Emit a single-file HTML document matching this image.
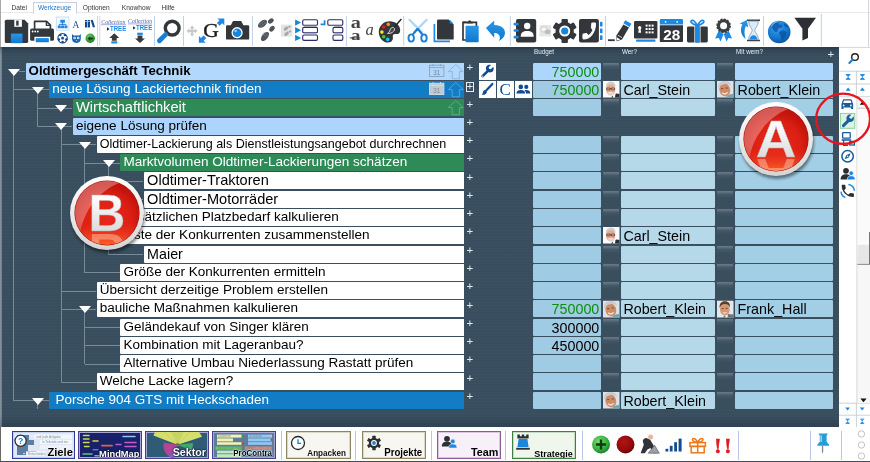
<!DOCTYPE html>
<html lang="de"><head><meta charset="utf-8"><title>Oldtimergeschäft Technik</title>
<style>
*{box-sizing:border-box;margin:0;padding:0}
html,body{width:870px;height:462px;overflow:hidden;background:#fff}
body{position:relative;will-change:transform;font-family:"Liberation Sans",sans-serif;color:#000}
.abs,.abs *{position:absolute}
#main{left:0;top:47px;width:839px;height:380px;background:#394f5f;overflow:hidden}
#main:before{content:"";position:absolute;inset:0;background:linear-gradient(180deg,rgba(10,20,35,.34) 0,rgba(10,20,35,.12) 4px,rgba(10,20,35,0) 9px,rgba(10,20,35,0) 368px,rgba(10,20,35,.22) 380px),linear-gradient(90deg,rgba(190,200,208,.55) 0,rgba(190,200,208,.55) 1.2px,rgba(190,200,208,0) 2.5px),repeating-linear-gradient(180deg,rgba(255,255,255,.012) 0 1px,rgba(0,0,0,.012) 1px 3px)}
.tb{position:absolute;border-radius:1px 0 0 1px;white-space:nowrap;overflow:hidden;padding-left:3.1px}
.tl{position:absolute;background:#788a96}
.cell{position:absolute;border-radius:1px;white-space:nowrap;overflow:hidden;font-size:14.3px}
.slot{position:absolute;background:linear-gradient(180deg,#6a7a85 0,#5c6e7a 1.5px,#43586a 3.5px,#3a4f5e 7px)}
.plus{position:absolute;color:#e4e9ec;font-size:11.5px;line-height:11px}
.menu span{position:absolute;top:3.2px;font-size:6.6px;line-height:9px;color:#333}
.hd{position:absolute;color:#e8eef2;font-size:6.3px;line-height:8px;top:0.6px}
svg{position:absolute;overflow:visible}
</style></head><body>

<div class="menu" style="position:absolute;left:0;top:0;width:870px;height:13.3px;background:#fff;border-bottom:1px solid #e3e7ee">
<div style="position:absolute;left:33.3px;top:1.6px;width:44px;height:12.7px;border:1px solid #c9d3e0;border-bottom:1px solid #fff;background:#fff"></div>
<span style="left:11.5px;color:#333">Datei</span>
<span style="left:38px;color:#1a78d0">Werkzeuge</span>
<span style="left:82.8px;color:#333">Optionen</span>
<span style="left:121.8px;color:#333">Knowhow</span>
<span style="left:161.6px;color:#333">Hilfe</span>
</div>
<div id="toolbar" style="position:absolute;left:0;top:14.3px;width:870px;height:32.7px;background:#fff"></div>
<svg id="tbsvg" style="left:0;top:0" width="870" height="47" viewBox="0 0 870 47" font-family="Liberation Sans, sans-serif">
<defs>
<linearGradient id="gb" x1="0" y1="0" x2="0" y2="1"><stop offset="0" stop-color="#2a96ea"/><stop offset="1" stop-color="#0f78cc"/></linearGradient>
<radialGradient id="gg" cx=".4" cy=".35" r=".7"><stop offset="0" stop-color="#6fd46a"/><stop offset="1" stop-color="#157a1c"/></radialGradient>
<radialGradient id="gglobe" cx=".4" cy=".3" r=".8"><stop offset="0" stop-color="#3aa0ee"/><stop offset=".6" stop-color="#1276cc"/><stop offset="1" stop-color="#084a94"/></radialGradient>
</defs>
<g stroke="#c3cfe3" stroke-width="1">
<path d="M97.5 16V46M99.8 16V46" stroke="#cdd7e8"/><path d="M154.5 16V46M183.5 16V46M252.4 16V46M346.4 16V46M403.7 16V46M510.3 16V46M605.5 16V46M763.6 16V46M821.3 14V46"/>
</g>
<!-- floppy -->
<path d="M6.3 19.8H24.6L28.2 23.4V41.5Q28.2 43 26.7 43H6.3Q4.8 43 4.8 41.5V21.3Q4.8 19.8 6.3 19.8Z" fill="#33383e"/>
<rect x="14.3" y="19.6" width="7.6" height="7.2" fill="#fff"/><rect x="16.2" y="20.6" width="2.4" height="5" fill="#33383e"/>
<rect x="10.9" y="33.6" width="11.6" height="9.6" fill="url(#gb)"/>
<!-- printer -->
<path d="M34.6 29V21.4H46.6L50.4 25.2V29" fill="#fff" stroke="#33383e" stroke-width="1.7" stroke-linejoin="round"/>
<path d="M46.4 21.4V25.4H50.4" fill="none" stroke="#33383e" stroke-width="1.4"/>
<rect x="30.1" y="28.6" width="23.9" height="12.2" rx="1.6" fill="#33383e"/>
<circle cx="32.6" cy="31.5" r=".9" fill="#fff"/><circle cx="35.2" cy="31.5" r=".9" fill="#fff"/><circle cx="37.8" cy="31.5" r=".9" fill="#fff"/>
<rect x="34.4" y="36.8" width="15.8" height="6.4" fill="#fff"/><rect x="35.7" y="37.9" width="13.2" height="4.3" rx=".8" fill="url(#gb)"/>
<!-- small icon grid -->
<rect x="56.3" y="17" width="12.6" height="13.2" fill="#f2f8fe" stroke="#c2daf3" stroke-width=".8"/>
<g fill="#1e88e5"><rect x="60.3" y="19.8" width="4.6" height="3"/><rect x="57.8" y="25.6" width="3" height="2.6"/><rect x="61.1" y="25.6" width="3" height="2.6"/><rect x="64.4" y="25.6" width="3" height="2.6"/></g>
<path d="M62.6 22.8V24.4M59.3 25.6V24.4H65.9V25.6M62.6 24.4V25.6" stroke="#155fa8" stroke-width=".8" fill="none"/>
<text x="72.6" y="28.4" font-family="Liberation Serif, serif" font-size="9.4" fill="#1d5a9e">A</text>
<g fill="#0f4b8e"><rect x="85" y="20" width="2.2" height="7.5"/><rect x="87.8" y="20" width="2.2" height="7.5"/><path d="M90.6 20.3L92.7 19.7L95 27L92.9 27.6Z"/></g>
<rect x="85" y="21.2" width="5" height=".7" fill="#fff" opacity=".7"/>
<circle cx="62.6" cy="38.2" r="4.700" fill="#fff" stroke="#0f4b8e" stroke-width="1.100"/>
<path d="M62.60 36.50L64.22 37.67L63.60 39.58L61.60 39.58L60.98 37.67Z" fill="#0f4b8e"/>
<circle cx="64.89" cy="35.04" r="1.250" fill="#0f4b8e"/>
<circle cx="66.31" cy="39.41" r="1.250" fill="#0f4b8e"/>
<circle cx="62.60" cy="42.10" r="1.250" fill="#0f4b8e"/>
<circle cx="58.89" cy="39.41" r="1.250" fill="#0f4b8e"/>
<circle cx="60.31" cy="35.04" r="1.250" fill="#0f4b8e"/>
<path d="M72 34l1.6 1.4h5.6L80.8 34v4.4q0 4-4.4 4.6q-4.4-.6-4.4-4.600z" fill="#1565b0"/>
<circle cx="74.6" cy="38" r="1.3" fill="#fff"/><circle cx="78.2" cy="38" r="1.3" fill="#fff"/><circle cx="74.6" cy="38" r=".5" fill="#1565b0"/><circle cx="78.2" cy="38" r=".5" fill="#1565b0"/><path d="M75.8 40l.6 1.200l.6-1.200z" fill="#fff"/>
<circle cx="90.2" cy="38.2" r="4.7" fill="url(#gg)"/><path d="M87.600 38.500l2.600-2.400v1.500h2.800v1.900h-2.800v1.500z" fill="#1c3a1c"/>
<!-- TREE 1 -->
<text x="101.300" y="23.800" font-family="Liberation Serif, serif" font-style="italic" font-size="5.300" fill="#4a5db5" textLength="24" lengthAdjust="spacingAndGlyphs">Collection</text>
<path d="M101 24.700H126" stroke="#4a5db5" stroke-width=".5"/>
<path d="M107 27.300l2.600 1.700l-2.600 1.700z" fill="#152a66"/>
<text x="110" y="31.200" font-size="6.600" font-weight="bold" fill="#1e88e5" textLength="16.200" lengthAdjust="spacingAndGlyphs">TREE</text>
<path d="M114.300 33.300l5 4.600h-2.600v2.800h-4.800v-2.800h-2.600z" fill="#3a3a3a"/><rect x="111.300" y="41.300" width="6" height="2.200" fill="#1e88e5"/>
<!-- TREE 2 -->
<text x="128.100" y="23" font-family="Liberation Serif, serif" font-style="italic" font-size="5.300" fill="#4a5db5" textLength="24" lengthAdjust="spacingAndGlyphs">Collection</text>
<path d="M128 23.900H152" stroke="#4a5db5" stroke-width=".5"/>
<path d="M133 26.200l2.600 1.700l-2.600 1.700z" fill="#152a66"/>
<text x="136" y="30.200" font-size="6.600" font-weight="bold" fill="#1e88e5" textLength="16.200" lengthAdjust="spacingAndGlyphs">TREE</text>
<rect x="137.200" y="32.700" width="5.600" height="2.200" fill="#1e88e5"/><path d="M140 43l-5-4.600h2.600v-2.800h4.800v2.800h2.600z" fill="#3a3a3a"/>
<!-- magnifier -->
<circle cx="172.200" cy="28.100" r="6.900" fill="none" stroke="#33363b" stroke-width="3.400"/>
<path d="M165.600 34.600L159.400 40.800" stroke="#1a7fd4" stroke-width="4.800" stroke-linecap="round"/>
<!-- move -->
<path d="M192.100 25.500l2.400 2.800h-1.400v1.700h1.700v-1.400l2.800 2.400l-2.800 2.400v-1.400h-1.700v1.700h1.400l-2.400 2.800l-2.400-2.800h1.400v-1.700h-1.700v1.400l-2.800-2.400l2.800-2.400v1.400h1.700v-1.700h-1.400z" fill="#c9c9c9"/>
<!-- G -->
<text x="0" y="0" transform="translate(203.300 36.800) scale(1.170 1)" font-family="Liberation Serif, serif" font-size="18.400" fill="#1c1c1c" stroke="#1c1c1c" stroke-width=".35">G</text>
<path d="M224.300 18.500v6.800l-2.100-2.100l-2.600 2.600l-2.700-2.700l2.600-2.600l-2.100-2.100z" fill="#1e88e5"/>
<path d="M198.900 42.700v-6.800l2.100 2.100l2.600-2.600l2.700 2.700l-2.600 2.600l2.100 2.100z" fill="#1e88e5"/>
<!-- camera -->
<path d="M227.200 25.200h3.600l2.200-4.200h8.200l2.200 4.200h4.600q1.200 0 1.200 1.200v12q0 1.200-1.200 1.200h-20.800q-1.200 0-1.200-1.200v-12q0-1.200 1.200-1.200z" fill="#33363b"/>
<circle cx="237.100" cy="32.700" r="5.600" fill="#fff"/><circle cx="237.100" cy="32.700" r="4.300" fill="#1585dd"/><circle cx="235.600" cy="31" r="1.200" fill="#8fd0ff"/>
<!-- footsteps -->
<g fill="#4d545c"><ellipse cx="262.500" cy="23.800" rx="5.300" ry="3" transform="rotate(-38 262.500 23.800)"/><ellipse cx="270.800" cy="21" rx="3.200" ry="2.200" transform="rotate(-38 270.800 21)"/>
<ellipse cx="265" cy="36.500" rx="5.300" ry="3" transform="rotate(-52 265 36.500)"/><ellipse cx="272" cy="28.700" rx="3.200" ry="2.300" transform="rotate(-52 272 28.700)"/></g>
<g stroke="#8c949c" stroke-width=".5"><path d="M259 25l6-4.600M260.500 26.500l6-4.600M262 33.500l4.600 3.600M263.400 32l4.600 3.600"/></g>
<rect x="281" y="24.600" width="11.400" height="12.100" fill="#e4e4e4"/>
<g fill="#a8a8a8"><ellipse cx="286" cy="28.600" rx="2.600" ry="1.600" transform="rotate(-40 286 28.600)"/><ellipse cx="289.400" cy="26.800" rx="1.300" ry="1" /><ellipse cx="286.600" cy="33.800" rx="2.600" ry="1.600" transform="rotate(-40 286.600 33.800)"/><ellipse cx="290" cy="31.400" rx="1.300" ry="1"/></g>
<!-- list icon -->
<g fill="#1a86d0"><path d="M295.100 19.400l6 3.200l-6 3.200z"/><path d="M295.100 27l6 3.200l-6 3.200z"/><path d="M295.100 34.700l6 3.200l-6 3.200z"/></g>
<g fill="#fff" stroke="#2b2b6b" stroke-width="1.100"><rect x="302.700" y="19.800" width="14.800" height="5.400" rx="1.300"/><rect x="302.700" y="27.400" width="14.800" height="5.400" rx="1.300"/><rect x="302.700" y="35" width="14.800" height="5.400" rx="1.300"/></g>
<path d="M304 26.300h12.400M304 33.900h12.400" stroke="#9a9aa8" stroke-width=".9"/>
<!-- hierarchy icon -->
<path d="M324.600 20.200v4.200h-4" stroke="#1a86d4" stroke-width="1.700" fill="none"/>
<g fill="#fff" stroke="#2b2b6b" stroke-width="1.100"><rect x="327.800" y="19.800" width="15" height="5.400" rx="1.300"/><rect x="333" y="27.400" width="9.800" height="5.400" rx="1.300"/><rect x="333" y="35" width="9.800" height="5.400" rx="1.300"/></g>
<path d="M334.400 26.300h7.400M334.400 33.900h7.400" stroke="#9a9aa8" stroke-width=".9"/>
<!-- a a a -->
<text transform="translate(350.700 27.600) scale(1.200 1)" font-family="Liberation Serif, serif" font-weight="bold" font-size="16.800" fill="#444">a</text>
<text transform="translate(350.900 40.300) scale(1.200 1)" font-family="Liberation Serif, serif" font-weight="bold" font-size="15.600" fill="#444">a</text>
<path d="M349.800 37.900H360.200" stroke="#444" stroke-width="1"/>
<text x="365.600" y="34.500" font-family="Liberation Serif, serif" font-style="italic" font-size="16.400" fill="#444">a</text>
<!-- palette -->
<path d="M389.600 21.200c6.200 0 10.600 4 10.600 9c0 3-2 4.200-4 3.800c-2.400-.5-3.800 .6-3.400 2.600c.5 2.300-.4 6-4.600 6c-5.400 0-9.400-4.800-9.400-10.600c0-6 4.800-10.800 10.800-10.800z" fill="#33363b"/>
<circle cx="383.700" cy="27" r="1.800" fill="#f01818"/><circle cx="388.300" cy="24.400" r="1.800" fill="#ff8a1c"/><circle cx="381.900" cy="32.100" r="1.800" fill="#f7e81a"/><circle cx="383.700" cy="36.700" r="1.800" fill="#2fd12f"/><circle cx="387.700" cy="39.400" r="1.800" fill="#23c3f0"/>
<path d="M401.400 18.900L393 28.600" stroke="#2a2a2a" stroke-width="1.500"/>
<path d="M393.600 27.600c1.400 1 1.200 2.200 .2 3.400c-1.600 2-3.800 2.800-6.200 2.400c1.600-1 2-2 2.400-3.400c.4-1.600 2-3.200 3.600-2.400z" fill="#444" stroke="#fff" stroke-width=".8"/>
<!-- scissors -->
<path d="M409.400 19.800L422 32.400M426.700 19.800L414.100 32.400" stroke="#a9d7f5" stroke-width="2.200" stroke-linecap="round"/>
<path d="M417.600 28.600L413 34.400M417.600 28.600L422.200 34.400" stroke="#1a7fd4" stroke-width="2.200"/>
<ellipse cx="411.200" cy="38" rx="2.700" ry="3.600" fill="none" stroke="#1a7fd4" stroke-width="1.900"/><ellipse cx="424" cy="38" rx="2.700" ry="3.600" fill="none" stroke="#1a7fd4" stroke-width="1.900"/>
<circle cx="417.600" cy="29.600" r="1.300" fill="#1a7fd4"/>
<!-- copy -->
<path d="M434.400 24v17.300h15.600" stroke="#1e88e5" stroke-width="1.700" fill="none"/>
<path d="M438.200 19.500h10.400l5.100 5.100v13.800q0 1.200-1.200 1.200h-14.300q-1.200 0-1.200-1.200v-17.700q0-1.200 1.200-1.200z" fill="#33363b"/>
<path d="M449.800 19.800l3.700 3.700h-3.700z" fill="#1e88e5"/>
<!-- paste -->
<path d="M466 22.400h-3v17.600h3" stroke="#33363b" stroke-width="1.700" fill="none"/><path d="M463 22.400h13.400v4" stroke="#33363b" stroke-width="1.700" fill="none"/>
<path d="M466.600 23.600v-1.800h1.600a1.500 1.500 0 0 1 3 0h1.600v1.800z" fill="#33363b"/>
<rect x="465.500" y="25.800" width="13.200" height="16.400" rx="1" fill="url(#gb)"/>
<!-- undo -->
<path d="M485.900 28.100l8.300-7.500v4.300c7.600 0 11 3.600 10.800 8.400c-.2 3.200-2.400 5.600-6 7.600c1.400-2.800 1.200-5-.4-6.400c-1.200-1-2.800-1.400-4.400-1.400v4.600z" fill="url(#gb)"/>
<!-- contacts -->
<rect x="516" y="18.900" width="20.200" height="23.600" rx="2" fill="#33363b"/>
<g fill="#1e88e5"><rect x="513.600" y="22.800" width="5.200" height="2.600" rx="1.200"/><rect x="513.600" y="29.200" width="5.200" height="2.600" rx="1.200"/><rect x="513.600" y="35.800" width="5.200" height="2.600" rx="1.200"/></g>
<circle cx="527.200" cy="26" r="3.200" fill="#fff"/><path d="M520.700 36.700c0-4 2.400-5.600 6.500-5.600s6.500 1.600 6.500 5.600z" fill="#fff"/>
<!-- chat -->
<rect x="539.400" y="25" width="11.800" height="11.400" fill="#e6e6e6"/><ellipse cx="544" cy="29.400" rx="3.400" ry="2.600" fill="#f6f6f6" stroke="#b4b4b4" stroke-width=".6"/><ellipse cx="547.600" cy="31.800" rx="3" ry="2.300" fill="#bdbdbd"/>
<!-- gear -->
<g fill="#33363b"><circle cx="564.700" cy="31" r="9.200"/>
<g><rect x="561.500" y="18.900" width="6.400" height="6" rx="1"/><rect x="561.500" y="37.100" width="6.400" height="6" rx="1"/></g>
<g transform="rotate(60 564.700 31)"><rect x="561.500" y="18.900" width="6.400" height="6" rx="1"/><rect x="561.500" y="37.100" width="6.400" height="6" rx="1"/></g><g transform="rotate(120 564.700 31)"><rect x="561.500" y="18.900" width="6.400" height="6" rx="1"/><rect x="561.500" y="37.100" width="6.400" height="6" rx="1"/></g></g>
<circle cx="564.700" cy="31" r="5.500" fill="#fff"/><circle cx="564.700" cy="31" r="3.600" fill="#1585dd"/>
<!-- phone book -->
<rect x="579" y="18.900" width="19.900" height="23.600" rx="2" fill="#33363b"/>
<g fill="#1e88e5"><rect x="600" y="21.800" width="2.500" height="4.700" rx=".6"/><rect x="600" y="28.500" width="2.500" height="4.700" rx=".6"/><rect x="600" y="35.300" width="2.500" height="4.700" rx=".6"/></g>
<path transform="translate(597.700 20.300) scale(-.705 .89)" stroke="#fff" stroke-width="1.2" d="M6.620 10.790c1.440 2.830 3.760 5.140 6.590 6.590l2.200-2.200c.27-.27.67-.36 1.020-.24 1.120.37 2.330.57 3.570.57.550 0 1 .45 1 1V20c0 .55-.45 1-1 1-9.390 0-17-7.610-17-17 0-.55.450-1 1-1h3.500c.55 0 1 .45 1 1 0 1.250.2 2.450.57 3.570.11.350.03.740-.25 1.020l-2.200 2.200z" fill="#fff"/>
<!-- pencil -->
<rect x="608" y="39.300" width="6.800" height="1.800" fill="#33363b"/>
<path d="M623.400 24.400l5.600 3.200l-7 12l-5.400 1.600l-.2-5.600z" fill="#33363b"/><path d="M617 37.400l3.400 2l-3.600 1.200z" fill="#fff"/><path d="M617.800 35.200l4.200 2.400" stroke="#fff" stroke-width=".7"/>
<path d="M625.200 20.200l6.200 3.600l-1.800 3.100l-6.200-3.600z" fill="#1e88e5"/>
<!-- safe -->
<rect x="634" y="21" width="23.400" height="17.400" rx="1.200" fill="#33363b"/><rect x="636" y="39.600" width="19.500" height="2.100" rx=".8" fill="#1e88e5"/>
<circle cx="639.700" cy="27.800" r="1.700" fill="#fff"/><path d="M638.800 28.600h1.800l.5 4.200h-2.800z" fill="#fff"/>
<g fill="#fff"><rect x="645.600" y="24.600" width="2" height="2"/><rect x="648.600" y="24.600" width="2" height="2"/><rect x="651.600" y="24.600" width="2" height="2"/><rect x="645.600" y="28" width="2" height="2"/><rect x="648.600" y="28" width="2" height="2"/><rect x="651.600" y="28" width="2" height="2"/><rect x="645.600" y="31.400" width="2" height="2"/><rect x="648.600" y="31.400" width="2" height="2"/><rect x="651.600" y="31.400" width="2" height="2"/></g>
<!-- calendar -->
<path d="M661 19.100h20.800q1.200 0 1.200 1.200v4.100h-23.200v-4.100q0-1.200 1.200-1.200z" fill="#1e88e5"/><circle cx="665.600" cy="21.800" r=".9" fill="#fff"/><circle cx="677.200" cy="21.800" r=".9" fill="#fff"/>
<path d="M659.800 25.200h23.200v15.700q0 1.200-1.200 1.200h-20.800q-1.200 0-1.200-1.200z" fill="#33363b"/>
<text x="663.200" y="39.600" font-weight="bold" font-size="14.400" fill="#fff" textLength="17" lengthAdjust="spacingAndGlyphs">28</text>
<!-- gift -->
<rect x="687" y="26.400" width="20.800" height="16.100" rx="1.400" fill="#33363b"/><rect x="694.400" y="25.400" width="1" height="17.600" fill="#fff"/><rect x="699.500" y="25.400" width="1" height="17.600" fill="#fff"/><rect x="695.200" y="24" width="4.500" height="18.500" fill="#1e88e5"/>
<path d="M697.400 25.600c-1.600-3-3.600-5.600-5.600-5.200c-2 .6-1 3.600 5.600 5.200zM697.400 25.600c1.600-3 3.600-5.600 5.600-5.200c2 .6 1 3.600-5.600 5.200z" fill="none" stroke="#1e88e5" stroke-width="1.600"/>
<!-- award -->
<path d="M718.600 30.800l-3.400 7.800l3.600-.6l1.800 3.400l3-7.400zM728.600 30.800l3.400 7.800l-3.600-.6l-1.800 3.400l-3-7.400z" fill="#1e88e5"/>
<circle cx="723.600" cy="25.800" r="6.600" fill="#3a3d42" stroke="#3a3d42" stroke-width="1.400" stroke-dasharray="2.200 1.250"/><circle cx="723.600" cy="25.800" r="3.500" fill="#fff"/>
<!-- hourglass -->
<path d="M747 20.200h13M747 40.600h13" stroke="#3a3d42" stroke-width="1.500"/>
<path d="M748.600 21.200h9.800c0 5-3.600 6.800-3.600 9.200s3.600 4.200 3.600 9.200h-9.800c0-5 3.600-6.800 3.600-9.200s-3.600-4.200-3.600-9.200z" fill="#d8ecfa" stroke="#8e9aa6" stroke-width=".8"/>
<path d="M749.600 39.400c.6-3 2-4.200 3.900-4.200s3.300 1.200 3.900 4.200z" fill="#1e88e5"/>
<path d="M745.600 39c-5-4-5.800-9.600-3.200-14.400l-2.600-1.200l7-3.400l1.400 7.200l-2.400-1.200c-1.800 4-1.600 8.600-.2 13z" fill="url(#gb)"/>
<!-- globe -->
<circle cx="779.200" cy="32" r="11.300" fill="url(#gglobe)"/>
<path d="M772 25c2-2 5-3 7-2.600c-1 1.400-.4 2.400 1.200 2.200c1.600-.2 2.800 1 2 2.400c-.8 1.200-2.600 .6-3.800 1.600c-1.200 1.200-.2 2.600-1.600 3.200c-1.600 .6-2.600-1-3.600-2.400c-1-1.600-2.200-2.800-1.200-4.400zM781 31c1.800-.8 4.400-.4 5.400 1.200c.8 1.600-.4 3.200-1.400 4.800c-.8 1.400-1.400 3.200-2.800 3c-1.400-.4-.8-2.200-1.400-3.600c-.6-1.600-2-2.400-1.600-3.800c.2-.8 1-1.200 1.800-1.600zM784 23.500c1.600 .2 3.400 1.600 4.400 3.400c-1.400 .6-2.800 0-3.800-1c-.8-.8-1.200-1.600-.6-2.400z" fill="#0a4f9c" opacity=".75"/>
<path d="M771.400 26.600a9.600 9.600 0 0 1 7-5.200" stroke="#8cc8ff" stroke-width="1.200" fill="none" opacity=".7"/>
<!-- funnel -->
<path d="M794.400 17.800h21.600l-8 10.900v9.300l-5.600 2.400v-11.700z" fill="#2c2f33"/>
<path d="M868.600 0V46.500" stroke="#cfd3d8" stroke-width="1"/>
</svg>

<div id="main" class="abs">
<span class="hd" style="left:534px">Budget</span><span class="hd" style="left:622px">Wer?</span><span class="hd" style="left:736px">Mit wem?</span>
<span class="plus" style="left:827.6px;top:1.6px">+</span>
<i class="tl" style="left:13.0px;top:27.5px;width:1.0px;height:326.0px"></i>
<i class="tl" style="left:13.4px;top:42.0px;width:35.3px;height:1.0px"></i>
<i class="tl" style="left:37.0px;top:45.7px;width:1.0px;height:33.6px"></i>
<i class="tl" style="left:37.1px;top:61.0px;width:35.3px;height:1.0px"></i>
<i class="tl" style="left:37.1px;top:79.0px;width:35.3px;height:1.0px"></i>
<i class="tl" style="left:61.0px;top:82.3px;width:1.0px;height:252.9px"></i>
<i class="tl" style="left:60.8px;top:97.0px;width:35.3px;height:1.0px"></i>
<i class="tl" style="left:84.0px;top:100.6px;width:1.0px;height:125.0px"></i>
<i class="tl" style="left:84.5px;top:116.0px;width:35.3px;height:1.0px"></i>
<i class="tl" style="left:108.0px;top:118.9px;width:1.0px;height:33.6px"></i>
<i class="tl" style="left:108.2px;top:134.0px;width:35.3px;height:1.0px"></i>
<i class="tl" style="left:108.2px;top:152.0px;width:35.3px;height:1.0px"></i>
<i class="tl" style="left:84.5px;top:170.0px;width:35.3px;height:1.0px"></i>
<i class="tl" style="left:84.5px;top:189.0px;width:35.3px;height:1.0px"></i>
<i class="tl" style="left:108.0px;top:192.0px;width:1.0px;height:15.3px"></i>
<i class="tl" style="left:108.2px;top:207.0px;width:35.3px;height:1.0px"></i>
<i class="tl" style="left:84.5px;top:225.0px;width:35.3px;height:1.0px"></i>
<i class="tl" style="left:60.8px;top:244.0px;width:35.3px;height:1.0px"></i>
<i class="tl" style="left:60.8px;top:262.0px;width:35.3px;height:1.0px"></i>
<i class="tl" style="left:84.0px;top:265.1px;width:1.0px;height:51.8px"></i>
<i class="tl" style="left:84.5px;top:280.0px;width:35.3px;height:1.0px"></i>
<i class="tl" style="left:84.5px;top:298.0px;width:35.3px;height:1.0px"></i>
<i class="tl" style="left:84.5px;top:317.0px;width:35.3px;height:1.0px"></i>
<i class="tl" style="left:60.8px;top:335.0px;width:35.3px;height:1.0px"></i>
<i class="tl" style="left:13.4px;top:353.0px;width:35.3px;height:1.0px"></i>
<i class="tl" style="left:18.9px;top:24.0px;width:6.6px;height:1.0px"></i>
<i class="tl" style="left:37.0px;top:356.5px;width:1.0px;height:5.0px"></i>
<div class="tb" style="left:25.5px;top:15.70px;width:438.5px;height:17.0px;background:#b2d9fd;color:#000;font-size:13.27px;line-height:16.5px;font-weight:bold;">Oldtimergeschäft Technik</div>
<svg style="left:7.9px;top:21.5px" width="12" height="7" viewBox="0 0 12 7"><path d="M0 0H12L6 7Z" fill="#fff"/></svg>
<span class="plus" style="left:466.4px;top:14.9px">+</span>
<div class="cell" style="left:532.8px;top:15.70px;width:68px;height:17.0px;background:#acd6fb;color:#0e8e0e;text-align:right;padding-right:1.5px;line-height:18.3px">750000</div>
<div class="slot" style="left:603.2px;top:15.70px;width:16px;height:17.0px"></div>
<div class="cell" style="left:620.8px;top:15.70px;width:94.4px;height:17.0px;background:#acd6fb;padding-left:2.6px;line-height:18.3px"></div>
<div class="slot" style="left:717.3px;top:15.70px;width:16px;height:17.0px"></div>
<div class="cell" style="left:734.8px;top:15.70px;width:98.6px;height:17.0px;background:#acd6fb;padding-left:2.8px;line-height:18.3px"></div>
<div class="tb" style="left:49.2px;top:33.98px;width:414.8px;height:17.0px;background:#127dc5;color:#fff;font-size:13.55px;line-height:16.5px;">neue Lösung Lackiertechnik finden</div>
<svg style="left:31.6px;top:39.7px" width="12" height="7" viewBox="0 0 12 7"><path d="M0 0H12L6 7Z" fill="#fff"/></svg>
<div style="position:absolute;left:465.8px;top:34.8px;width:8.2px;height:9.8px;border:1px solid #e8edf0"></div>
<span class="plus" style="left:466.4px;top:34.0px">+</span>
<div class="cell" style="left:532.8px;top:33.98px;width:68px;height:17.0px;background:#9fcbe4;color:#0e8e0e;text-align:right;padding-right:1.5px;line-height:18.3px">750000</div>
<div class="slot" style="left:603.2px;top:33.98px;width:16px;height:17.0px"></div>
<div class="cell" style="left:620.8px;top:33.98px;width:94.4px;height:17.0px;background:#b6d9ea;padding-left:2.6px;line-height:18.3px">Carl_Stein</div>
<div class="slot" style="left:717.3px;top:33.98px;width:16px;height:17.0px"></div>
<div class="cell" style="left:734.8px;top:33.98px;width:98.6px;height:17.0px;background:#a3cfe6;padding-left:2.8px;line-height:18.3px">Robert_Klein</div>
<svg style="left:603px;top:34.18px" width="16.5" height="16.5" viewBox="0 0 16 16"><rect width="16" height="16" fill="#fcfcfc"/>
<path d="M8 16c1-2.400 3-3.600 5.400-4l2.600.6v3.400z" fill="#2b2e34"/><path d="M8.600 13l1.400 3h1.600l.6-3.600z" fill="#f4f4f4"/>
<ellipse cx="7.400" cy="8" rx="4.500" ry="5.800" fill="#e6aa8c"/><path d="M2.800 6.600c-.4-4 1.800-6.200 4.800-6.200s5 2 4.400 6c-.6-2-1.800-3.200-4.500-3.200s-3.900 1.200-4.700 3.400z" fill="#cfcfcf"/>
<path d="M3.600 10.400c.6 2.600 2.200 3.800 3.800 3.800s3.200-1.200 3.800-3.800c-1.200 1-2.400 1.400-3.800 1.400s-2.600-.4-3.800-1.400z" fill="#ddd6d0"/>
<path d="M3.600 6.800h3.200v1.800h-3.200zM8 6.800h3.200v1.800h-3.200zM6.800 7.400h1.200" fill="none" stroke="#3e3230" stroke-width=".6"/><path d="M5.600 11q1.800 1.200 3.600 0" stroke="#fff" stroke-width=".9" fill="none"/></svg>
<svg style="left:717.2px;top:34.18px" width="16.5" height="16.5" viewBox="0 0 16 16"><rect width="16" height="16" fill="#dbe3ea"/>
<path d="M9 16c.4-1.600 1.600-2.600 3.400-3l3.600-.6v3.600z" fill="#6aaab4"/>
<ellipse cx="7.600" cy="8.600" rx="5.200" ry="6.400" fill="#cd8d68" transform="rotate(-14 7.600 8.600)"/>
<path d="M1 7.600c-.6-4.400 2-7.600 6.400-7.600c3.600 0 6.200 1.800 6.200 5.200c-1.200-1.800-3-2.400-5.600-2.200c-3 .2-5.400 1.800-7 4.600z" fill="#c9cbce"/>
<path d="M4.800 11.400q2.600 2.200 5.800-.4q-2.600 3.600-5.800.4z" fill="#fff" stroke="#fff" stroke-width=".5"/><path d="M4 7.400h2M8.400 6.800h2" stroke="#5a3a2c" stroke-width=".8"/></svg>
<div class="tb" style="left:72.9px;top:52.26px;width:391.1px;height:17.0px;background:#2e8b57;color:#fff;font-size:14.66px;line-height:16.5px;">Wirtschaftlichkeit</div>
<svg style="left:55.3px;top:58.0px" width="12" height="7" viewBox="0 0 12 7"><path d="M0 0H12L6 7Z" fill="#fff"/></svg>
<span class="plus" style="left:466.4px;top:51.5px">+</span>
<div class="cell" style="left:532.8px;top:52.26px;width:68px;height:17.0px;background:#9fcbe4;color:#000;text-align:right;padding-right:1.5px;line-height:18.3px"></div>
<div class="slot" style="left:603.2px;top:52.26px;width:16px;height:17.0px"></div>
<div class="cell" style="left:620.8px;top:52.26px;width:94.4px;height:17.0px;background:#b6d9ea;padding-left:2.6px;line-height:18.3px"></div>
<div class="slot" style="left:717.3px;top:52.26px;width:16px;height:17.0px"></div>
<div class="cell" style="left:734.8px;top:52.26px;width:98.6px;height:17.0px;background:#a3cfe6;padding-left:2.8px;line-height:18.3px"></div>
<div class="tb" style="left:72.9px;top:70.54px;width:391.1px;height:17.0px;background:#acd4fc;color:#000;font-size:13.54px;line-height:16.5px;">eigene Lösung prüfen</div>
<svg style="left:55.3px;top:76.3px" width="12" height="7" viewBox="0 0 12 7"><path d="M0 0H12L6 7Z" fill="#fff"/></svg>
<span class="plus" style="left:466.4px;top:69.7px">+</span>
<div class="tb" style="left:96.6px;top:88.82px;width:367.4px;height:17.0px;background:#fff;color:#000;font-size:12.56px;line-height:17.9px;">Oldtimer-Lackierung als Dienstleistungsangebot durchrechnen</div>
<svg style="left:79.0px;top:94.6px" width="12" height="7" viewBox="0 0 12 7"><path d="M0 0H12L6 7Z" fill="#fff"/></svg>
<span class="plus" style="left:466.4px;top:88.0px">+</span>
<div class="cell" style="left:532.8px;top:88.82px;width:68px;height:17.0px;background:#9fcbe4;color:#000;text-align:right;padding-right:1.5px;line-height:18.3px"></div>
<div class="slot" style="left:603.2px;top:88.82px;width:16px;height:17.0px"></div>
<div class="cell" style="left:620.8px;top:88.82px;width:94.4px;height:17.0px;background:#b6d9ea;padding-left:2.6px;line-height:18.3px"></div>
<div class="slot" style="left:717.3px;top:88.82px;width:16px;height:17.0px"></div>
<div class="cell" style="left:734.8px;top:88.82px;width:98.6px;height:17.0px;background:#a3cfe6;padding-left:2.8px;line-height:18.3px"></div>
<div class="tb" style="left:120.3px;top:107.10px;width:343.7px;height:17.0px;background:#2e8b57;color:#fff;font-size:13.55px;line-height:16.5px;">Marktvolumen Oldtimer-Lackierungen schätzen</div>
<svg style="left:102.7px;top:112.9px" width="12" height="7" viewBox="0 0 12 7"><path d="M0 0H12L6 7Z" fill="#fff"/></svg>
<span class="plus" style="left:466.4px;top:106.3px">+</span>
<div class="cell" style="left:532.8px;top:107.10px;width:68px;height:17.0px;background:#9fcbe4;color:#000;text-align:right;padding-right:1.5px;line-height:18.3px"></div>
<div class="slot" style="left:603.2px;top:107.10px;width:16px;height:17.0px"></div>
<div class="cell" style="left:620.8px;top:107.10px;width:94.4px;height:17.0px;background:#b6d9ea;padding-left:2.6px;line-height:18.3px"></div>
<div class="slot" style="left:717.3px;top:107.10px;width:16px;height:17.0px"></div>
<div class="cell" style="left:734.8px;top:107.10px;width:98.6px;height:17.0px;background:#a3cfe6;padding-left:2.8px;line-height:18.3px"></div>
<div class="tb" style="left:144.0px;top:125.38px;width:320.0px;height:17.0px;background:#fff;color:#000;font-size:14.57px;line-height:16.5px;">Oldtimer-Traktoren</div>
<span class="plus" style="left:466.4px;top:124.6px">+</span>
<div class="cell" style="left:532.8px;top:125.38px;width:68px;height:17.0px;background:#9fcbe4;color:#000;text-align:right;padding-right:1.5px;line-height:18.3px"></div>
<div class="slot" style="left:603.2px;top:125.38px;width:16px;height:17.0px"></div>
<div class="cell" style="left:620.8px;top:125.38px;width:94.4px;height:17.0px;background:#b6d9ea;padding-left:2.6px;line-height:18.3px"></div>
<div class="slot" style="left:717.3px;top:125.38px;width:16px;height:17.0px"></div>
<div class="cell" style="left:734.8px;top:125.38px;width:98.6px;height:17.0px;background:#a3cfe6;padding-left:2.8px;line-height:18.3px"></div>
<div class="tb" style="left:144.0px;top:143.66px;width:320.0px;height:17.0px;background:#fff;color:#000;font-size:14.57px;line-height:16.5px;">Oldtimer-Motorräder</div>
<span class="plus" style="left:466.4px;top:142.9px">+</span>
<div class="cell" style="left:532.8px;top:143.66px;width:68px;height:17.0px;background:#9fcbe4;color:#000;text-align:right;padding-right:1.5px;line-height:18.3px"></div>
<div class="slot" style="left:603.2px;top:143.66px;width:16px;height:17.0px"></div>
<div class="cell" style="left:620.8px;top:143.66px;width:94.4px;height:17.0px;background:#b6d9ea;padding-left:2.6px;line-height:18.3px"></div>
<div class="slot" style="left:717.3px;top:143.66px;width:16px;height:17.0px"></div>
<div class="cell" style="left:734.8px;top:143.66px;width:98.6px;height:17.0px;background:#a3cfe6;padding-left:2.8px;line-height:18.3px"></div>
<div class="tb" style="left:120.3px;top:161.94px;width:343.7px;height:17.0px;background:#fff;color:#000;font-size:13.55px;line-height:16.5px;">zusätzlichen Platzbedarf kalkulieren</div>
<span class="plus" style="left:466.4px;top:161.1px">+</span>
<div class="cell" style="left:532.8px;top:161.94px;width:68px;height:17.0px;background:#9fcbe4;color:#000;text-align:right;padding-right:1.5px;line-height:18.3px"></div>
<div class="slot" style="left:603.2px;top:161.94px;width:16px;height:17.0px"></div>
<div class="cell" style="left:620.8px;top:161.94px;width:94.4px;height:17.0px;background:#b6d9ea;padding-left:2.6px;line-height:18.3px"></div>
<div class="slot" style="left:717.3px;top:161.94px;width:16px;height:17.0px"></div>
<div class="cell" style="left:734.8px;top:161.94px;width:98.6px;height:17.0px;background:#a3cfe6;padding-left:2.8px;line-height:18.3px"></div>
<div class="tb" style="left:120.3px;top:180.22px;width:343.7px;height:17.0px;background:#fff;color:#000;font-size:13.55px;line-height:16.5px;">Liste der Konkurrenten zusammenstellen</div>
<svg style="left:102.7px;top:186.0px" width="12" height="7" viewBox="0 0 12 7"><path d="M0 0H12L6 7Z" fill="#fff"/></svg>
<span class="plus" style="left:466.4px;top:179.4px">+</span>
<div class="cell" style="left:532.8px;top:180.22px;width:68px;height:17.0px;background:#9fcbe4;color:#000;text-align:right;padding-right:1.5px;line-height:18.3px"></div>
<div class="slot" style="left:603.2px;top:180.22px;width:16px;height:17.0px"></div>
<div class="cell" style="left:620.8px;top:180.22px;width:94.4px;height:17.0px;background:#b6d9ea;padding-left:2.6px;line-height:18.3px">Carl_Stein</div>
<div class="slot" style="left:717.3px;top:180.22px;width:16px;height:17.0px"></div>
<div class="cell" style="left:734.8px;top:180.22px;width:98.6px;height:17.0px;background:#a3cfe6;padding-left:2.8px;line-height:18.3px"></div>
<svg style="left:603px;top:180.42px" width="16.5" height="16.5" viewBox="0 0 16 16"><rect width="16" height="16" fill="#fcfcfc"/>
<path d="M8 16c1-2.400 3-3.600 5.400-4l2.600.6v3.400z" fill="#2b2e34"/><path d="M8.600 13l1.400 3h1.600l.6-3.600z" fill="#f4f4f4"/>
<ellipse cx="7.400" cy="8" rx="4.500" ry="5.800" fill="#e6aa8c"/><path d="M2.800 6.600c-.4-4 1.800-6.200 4.800-6.200s5 2 4.400 6c-.6-2-1.800-3.200-4.500-3.200s-3.900 1.200-4.700 3.400z" fill="#cfcfcf"/>
<path d="M3.600 10.400c.6 2.600 2.200 3.800 3.800 3.800s3.200-1.200 3.800-3.800c-1.200 1-2.400 1.400-3.800 1.400s-2.600-.4-3.800-1.400z" fill="#ddd6d0"/>
<path d="M3.600 6.800h3.200v1.800h-3.200zM8 6.800h3.200v1.800h-3.200zM6.800 7.400h1.200" fill="none" stroke="#3e3230" stroke-width=".6"/><path d="M5.600 11q1.800 1.200 3.600 0" stroke="#fff" stroke-width=".9" fill="none"/></svg>
<div class="tb" style="left:144.0px;top:198.50px;width:320.0px;height:17.0px;background:#fff;color:#000;font-size:14.3px;line-height:16.5px;">Maier</div>
<span class="plus" style="left:466.4px;top:197.7px">+</span>
<div class="cell" style="left:532.8px;top:198.50px;width:68px;height:17.0px;background:#9fcbe4;color:#000;text-align:right;padding-right:1.5px;line-height:18.3px"></div>
<div class="slot" style="left:603.2px;top:198.50px;width:16px;height:17.0px"></div>
<div class="cell" style="left:620.8px;top:198.50px;width:94.4px;height:17.0px;background:#b6d9ea;padding-left:2.6px;line-height:18.3px"></div>
<div class="slot" style="left:717.3px;top:198.50px;width:16px;height:17.0px"></div>
<div class="cell" style="left:734.8px;top:198.50px;width:98.6px;height:17.0px;background:#a3cfe6;padding-left:2.8px;line-height:18.3px"></div>
<div class="tb" style="left:120.3px;top:216.78px;width:343.7px;height:17.0px;background:#fff;color:#000;font-size:13.52px;line-height:16.5px;">Größe der Konkurrenten ermitteln</div>
<span class="plus" style="left:466.4px;top:216.0px">+</span>
<div class="cell" style="left:532.8px;top:216.78px;width:68px;height:17.0px;background:#9fcbe4;color:#000;text-align:right;padding-right:1.5px;line-height:18.3px"></div>
<div class="slot" style="left:603.2px;top:216.78px;width:16px;height:17.0px"></div>
<div class="cell" style="left:620.8px;top:216.78px;width:94.4px;height:17.0px;background:#b6d9ea;padding-left:2.6px;line-height:18.3px"></div>
<div class="slot" style="left:717.3px;top:216.78px;width:16px;height:17.0px"></div>
<div class="cell" style="left:734.8px;top:216.78px;width:98.6px;height:17.0px;background:#a3cfe6;padding-left:2.8px;line-height:18.3px"></div>
<div class="tb" style="left:96.6px;top:235.06px;width:367.4px;height:17.0px;background:#fff;color:#000;font-size:13.52px;line-height:16.5px;">Übersicht derzeitige Problem erstellen</div>
<span class="plus" style="left:466.4px;top:234.3px">+</span>
<div class="cell" style="left:532.8px;top:235.06px;width:68px;height:17.0px;background:#9fcbe4;color:#000;text-align:right;padding-right:1.5px;line-height:18.3px"></div>
<div class="slot" style="left:603.2px;top:235.06px;width:16px;height:17.0px"></div>
<div class="cell" style="left:620.8px;top:235.06px;width:94.4px;height:17.0px;background:#b6d9ea;padding-left:2.6px;line-height:18.3px"></div>
<div class="slot" style="left:717.3px;top:235.06px;width:16px;height:17.0px"></div>
<div class="cell" style="left:734.8px;top:235.06px;width:98.6px;height:17.0px;background:#a3cfe6;padding-left:2.8px;line-height:18.3px"></div>
<div class="tb" style="left:96.6px;top:253.34px;width:367.4px;height:17.0px;background:#fff;color:#000;font-size:13.53px;line-height:16.5px;">bauliche Maßnahmen kalkulieren</div>
<svg style="left:79.0px;top:259.1px" width="12" height="7" viewBox="0 0 12 7"><path d="M0 0H12L6 7Z" fill="#fff"/></svg>
<span class="plus" style="left:466.4px;top:252.5px">+</span>
<div class="cell" style="left:532.8px;top:253.34px;width:68px;height:17.0px;background:#9fcbe4;color:#0e8e0e;text-align:right;padding-right:1.5px;line-height:18.3px">750000</div>
<div class="slot" style="left:603.2px;top:253.34px;width:16px;height:17.0px"></div>
<div class="cell" style="left:620.8px;top:253.34px;width:94.4px;height:17.0px;background:#b6d9ea;padding-left:2.6px;line-height:18.3px">Robert_Klein</div>
<div class="slot" style="left:717.3px;top:253.34px;width:16px;height:17.0px"></div>
<div class="cell" style="left:734.8px;top:253.34px;width:98.6px;height:17.0px;background:#a3cfe6;padding-left:2.8px;line-height:18.3px">Frank_Hall</div>
<svg style="left:603px;top:253.54px" width="16.5" height="16.5" viewBox="0 0 16 16"><rect width="16" height="16" fill="#dbe3ea"/>
<path d="M9 16c.4-1.600 1.600-2.600 3.400-3l3.600-.6v3.600z" fill="#6aaab4"/>
<ellipse cx="7.600" cy="8.600" rx="5.200" ry="6.400" fill="#cd8d68" transform="rotate(-14 7.600 8.600)"/>
<path d="M1 7.600c-.6-4.400 2-7.600 6.400-7.600c3.600 0 6.200 1.800 6.200 5.200c-1.200-1.800-3-2.400-5.600-2.200c-3 .2-5.400 1.800-7 4.600z" fill="#c9cbce"/>
<path d="M4.800 11.400q2.600 2.200 5.800-.4q-2.600 3.600-5.800.4z" fill="#fff" stroke="#fff" stroke-width=".5"/><path d="M4 7.400h2M8.400 6.800h2" stroke="#5a3a2c" stroke-width=".8"/></svg>
<svg style="left:717.2px;top:253.54px" width="16.5" height="16.5" viewBox="0 0 16 16"><rect width="16" height="16" fill="#e3e8ec"/>
<path d="M6 16c.6-2 2-3 4.400-3.400l5.600.4v3z" fill="#6d7178"/><path d="M7.200 13l1.400 3h1.400l.8-3.400z" fill="#f4f4f4"/>
<ellipse cx="7.600" cy="8.200" rx="4.700" ry="5.900" fill="#d59872" transform="rotate(-8 7.600 8.200)"/>
<path d="M2.600 6.800c-.6-4.200 1.600-6.600 5-6.600s5.600 2.200 4.800 6c-.8-2-2-3.200-4.800-3.200s-4 1.200-5 3.800z" fill="#5e3d24"/>
<path d="M5.800 11.200q1.800 1.200 3.600 0" stroke="#fff" stroke-width=".8" fill="none"/><path d="M4.600 7.400h1.800M8.400 7.200h1.800" stroke="#3e2a20" stroke-width=".7"/></svg>
<div class="tb" style="left:120.3px;top:271.62px;width:343.7px;height:17.0px;background:#fff;color:#000;font-size:13.51px;line-height:16.5px;">Geländekauf von Singer klären</div>
<span class="plus" style="left:466.4px;top:270.8px">+</span>
<div class="cell" style="left:532.8px;top:271.62px;width:68px;height:17.0px;background:#9fcbe4;color:#000;text-align:right;padding-right:1.5px;line-height:18.3px">300000</div>
<div class="slot" style="left:603.2px;top:271.62px;width:16px;height:17.0px"></div>
<div class="cell" style="left:620.8px;top:271.62px;width:94.4px;height:17.0px;background:#b6d9ea;padding-left:2.6px;line-height:18.3px"></div>
<div class="slot" style="left:717.3px;top:271.62px;width:16px;height:17.0px"></div>
<div class="cell" style="left:734.8px;top:271.62px;width:98.6px;height:17.0px;background:#a3cfe6;padding-left:2.8px;line-height:18.3px"></div>
<div class="tb" style="left:120.3px;top:289.90px;width:343.7px;height:17.0px;background:#fff;color:#000;font-size:13.5px;line-height:16.5px;">Kombination mit Lageranbau?</div>
<span class="plus" style="left:466.4px;top:289.1px">+</span>
<div class="cell" style="left:532.8px;top:289.90px;width:68px;height:17.0px;background:#9fcbe4;color:#000;text-align:right;padding-right:1.5px;line-height:18.3px">450000</div>
<div class="slot" style="left:603.2px;top:289.90px;width:16px;height:17.0px"></div>
<div class="cell" style="left:620.8px;top:289.90px;width:94.4px;height:17.0px;background:#b6d9ea;padding-left:2.6px;line-height:18.3px"></div>
<div class="slot" style="left:717.3px;top:289.90px;width:16px;height:17.0px"></div>
<div class="cell" style="left:734.8px;top:289.90px;width:98.6px;height:17.0px;background:#a3cfe6;padding-left:2.8px;line-height:18.3px"></div>
<div class="tb" style="left:120.3px;top:308.18px;width:343.7px;height:17.0px;background:#fff;color:#000;font-size:13.52px;line-height:16.5px;">Alternative Umbau Niederlassung Rastatt prüfen</div>
<span class="plus" style="left:466.4px;top:307.4px">+</span>
<div class="cell" style="left:532.8px;top:308.18px;width:68px;height:17.0px;background:#9fcbe4;color:#000;text-align:right;padding-right:1.5px;line-height:18.3px"></div>
<div class="slot" style="left:603.2px;top:308.18px;width:16px;height:17.0px"></div>
<div class="cell" style="left:620.8px;top:308.18px;width:94.4px;height:17.0px;background:#b6d9ea;padding-left:2.6px;line-height:18.3px"></div>
<div class="slot" style="left:717.3px;top:308.18px;width:16px;height:17.0px"></div>
<div class="cell" style="left:734.8px;top:308.18px;width:98.6px;height:17.0px;background:#a3cfe6;padding-left:2.8px;line-height:18.3px"></div>
<div class="tb" style="left:96.6px;top:326.46px;width:367.4px;height:17.0px;background:#fff;color:#000;font-size:13.52px;line-height:16.5px;">Welche Lacke lagern?</div>
<span class="plus" style="left:466.4px;top:325.7px">+</span>
<div class="cell" style="left:532.8px;top:326.46px;width:68px;height:17.0px;background:#9fcbe4;color:#000;text-align:right;padding-right:1.5px;line-height:18.3px"></div>
<div class="slot" style="left:603.2px;top:326.46px;width:16px;height:17.0px"></div>
<div class="cell" style="left:620.8px;top:326.46px;width:94.4px;height:17.0px;background:#b6d9ea;padding-left:2.6px;line-height:18.3px"></div>
<div class="slot" style="left:717.3px;top:326.46px;width:16px;height:17.0px"></div>
<div class="cell" style="left:734.8px;top:326.46px;width:98.6px;height:17.0px;background:#a3cfe6;padding-left:2.8px;line-height:18.3px"></div>
<div class="tb" style="left:49.2px;top:344.74px;width:414.8px;height:17.0px;padding-left:6.4px;background:#127dc5;color:#fff;font-size:13.43px;line-height:16.5px;">Porsche 904 GTS mit Heckschaden</div>
<svg style="left:31.6px;top:350.5px" width="12" height="7" viewBox="0 0 12 7"><path d="M0 0H12L6 7Z" fill="#fff"/></svg>
<span class="plus" style="left:466.4px;top:343.9px">+</span>
<div class="cell" style="left:532.8px;top:344.74px;width:68px;height:17.0px;background:#9fcbe4;color:#000;text-align:right;padding-right:1.5px;line-height:18.3px"></div>
<div class="slot" style="left:603.2px;top:344.74px;width:16px;height:17.0px"></div>
<div class="cell" style="left:620.8px;top:344.74px;width:94.4px;height:17.0px;background:#b6d9ea;padding-left:2.6px;line-height:18.3px">Robert_Klein</div>
<div class="slot" style="left:717.3px;top:344.74px;width:16px;height:17.0px"></div>
<div class="cell" style="left:734.8px;top:344.74px;width:98.6px;height:17.0px;background:#a3cfe6;padding-left:2.8px;line-height:18.3px"></div>
<svg style="left:603px;top:344.94px" width="16.5" height="16.5" viewBox="0 0 16 16"><rect width="16" height="16" fill="#dbe3ea"/>
<path d="M9 16c.4-1.600 1.600-2.600 3.400-3l3.600-.6v3.600z" fill="#6aaab4"/>
<ellipse cx="7.600" cy="8.600" rx="5.200" ry="6.400" fill="#cd8d68" transform="rotate(-14 7.600 8.600)"/>
<path d="M1 7.600c-.6-4.400 2-7.600 6.400-7.600c3.600 0 6.200 1.800 6.200 5.200c-1.200-1.800-3-2.400-5.600-2.200c-3 .2-5.400 1.800-7 4.600z" fill="#c9cbce"/>
<path d="M4.800 11.400q2.600 2.200 5.800-.4q-2.600 3.600-5.800.4z" fill="#fff" stroke="#fff" stroke-width=".5"/><path d="M4 7.400h2M8.400 6.800h2" stroke="#5a3a2c" stroke-width=".8"/></svg>
<div style="position:absolute;left:479.3px;top:15.7px;width:16.700px;height:17px;background:#fff"></div>
<div style="position:absolute;left:479.3px;top:34.0px;width:16.700px;height:17px;background:#fff"></div>
<div style="position:absolute;left:497.3px;top:34.0px;width:16.700px;height:17px;background:#fff"></div>
<div style="position:absolute;left:515.3px;top:34.0px;width:16.700px;height:17px;background:#fff"></div>
<svg style="left:479.300px;top:15.7px" width="16.700" height="16.600" viewBox="0 0 16.700 16.600"><path d="M3.600 13.200L10 6.800" stroke="#0f4b8e" stroke-width="2.600" stroke-linecap="round"/><path d="M13.900 3.200l-2.300 2.300l-1.700-.4l-.4-1.700l2.300-2.300c-1.600-.5-3.300-.1-4.300 1.200c-1 1.300-1 2.900-.4 4.100l1.900 1.900c1.200.6 2.800.6 4.100-.4c1.300-1 1.700-2.700 1.200-4.300z" fill="#0f4b8e" transform="translate(.2 .8)"/><circle cx="3.700" cy="13.100" r=".7" fill="#fff"/></svg>
<svg style="left:479.300px;top:34.0px" width="16.700" height="16.600" viewBox="0 0 16.700 16.600"><path d="M13.400 3L7.400 9.200" stroke="#0f4b8e" stroke-width="2.200" stroke-linecap="round"/><path d="M6.800 9.200c1.200.8 1.400 2 .6 3c-1.200 1.600-3 1.800-4.800 1.400c1-.8 1.200-1.600 1.400-2.600c.4-1.600 1.600-2.400 2.800-1.800z" fill="#0f4b8e"/></svg>
<span style="position:absolute;left:499.400px;top:32.8px;font-family:'Liberation Serif',serif;font-size:17px;line-height:19px;color:#0f4b8e">C</span>
<svg style="left:515.300px;top:34.0px" width="16.700" height="16.600" viewBox="0 0 16.700 16.600" fill="#0f4b8e"><circle cx="5.800" cy="5.900" r="2.300"/><circle cx="11.300" cy="5.900" r="2.100"/><path d="M1.400 12.600c0-2.600 2-3.600 4.400-3.600s4.400 1 4.400 3.600z"/><path d="M11 12.600c0-1.600-.6-2.600-1.600-3.200c.6-.2 1.200-.4 1.900-.4c2.400 0 4 1 4 3.600z"/></svg>
<svg style="left:429.400px;top:16.6px" width="15.400" height="13" viewBox="0 0 15.400 13"><rect x=".5" y="1.200" width="14.400" height="11.300" fill="none" stroke="#8aa3bd" stroke-width=".9"/><path d="M.5 3.600h14.400M4 0v2.400M11.400 0v2.400" stroke="#8aa3bd" stroke-width=".9"/><text x="7.700" y="10.600" text-anchor="middle" font-size="6.400" font-family="Liberation Sans, sans-serif" fill="#6d8299">31</text></svg>
<svg style="left:448.200px;top:16.6px" width="15.600" height="15.400" viewBox="0 0 15.600 15.400"><path d="M7.800 .5L15.200 7.600h-3.800v7.200h-7.200v-7.200h-3.800z" fill="none" stroke="#8fb1d0" stroke-width=".9" stroke-linejoin="round"/></svg>
<svg style="left:429.400px;top:35.0px" width="15.400" height="13" viewBox="0 0 15.400 13"><rect x=".5" y="1.200" width="14.400" height="11.300" fill="#bfc9d2" stroke="#d4dde4" stroke-width=".9"/><path d="M.5 3.600h14.400M4 0v2.400M11.400 0v2.400" stroke="#d4dde4" stroke-width=".9"/><text x="7.700" y="10.600" text-anchor="middle" font-size="6.400" font-family="Liberation Sans, sans-serif" fill="#7d8fa0">31</text></svg>
<svg style="left:448.200px;top:35.0px" width="15.600" height="15.400" viewBox="0 0 15.600 15.400"><path d="M7.800 .5L15.200 7.600h-3.800v7.200h-7.200v-7.200h-3.800z" fill="none" stroke="#5aa6e0" stroke-width=".9" stroke-linejoin="round"/></svg>
<svg style="left:448.200px;top:53.3px" width="15.600" height="15.400" viewBox="0 0 15.600 15.400"><path d="M7.800 .5L15.200 7.600h-3.800v7.200h-7.200v-7.200h-3.800z" fill="none" stroke="#5fb083" stroke-width=".9" stroke-linejoin="round"/></svg>
</div>
<div id="side" style="position:absolute;left:839px;top:47px;width:31px;height:380px;background:#fff"></div>
<svg style="left:839px;top:47px" width="31" height="380" viewBox="839 47 31 380">
<g stroke="#bfc5cc" stroke-width=".8"><path d="M839 71.200H870M839 84H870M839 96.800H870M856.400 71.200V96.800"/><path d="M839 403.200H870M839 415.200H870M856.400 403.200V427"/></g>
<path d="M839 47.400H870" stroke="#c8ccd2" stroke-width=".8"/>
<circle cx="855" cy="57.100" r="3.300" fill="none" stroke="#222" stroke-width="1.400"/><path d="M852.500 59.800L849.400 63" stroke="#1a7fd4" stroke-width="2" stroke-linecap="round"/>
<g fill="#1a86e0"><rect x="845.8" y="74" width="4.600" height=".9"/><path d="M845.9 74.900h4.400l-2.200 2z"/><path d="M845.9 78.900h4.400l-2.200-2z"/><rect x="845.8" y="78.900" width="4.600" height=".9"/></g>
<path d="M845.6 90.800h5l-2.500-3.200z" fill="#1a86e0"/>
<g fill="#1a86e0"><rect x="860.1" y="74" width="4.600" height=".9"/><path d="M860.2 74.900h4.400l-2.200 2z"/><path d="M860.2 78.900h4.400l-2.200-2z"/><rect x="860.1" y="78.900" width="4.600" height=".9"/></g>
<path d="M859.9 90.800h5l-2.500-3.200z" fill="#1a86e0"/>
<path d="M845.3 407.600h4.600l-2.300 3z" fill="#1a86e0"/>
<g fill="#1a86e0"><rect x="845.6" y="418.600" width="4" height=".8"/><path d="M845.7 419.400h3.800l-1.900 1.900z"/><path d="M845.7 423.200h3.800l-1.900-1.900z"/><rect x="845.6" y="423.200" width="4" height=".8"/></g>
<path d="M859.9 407.600h4.600l-2.300 3z" fill="#1a86e0"/>
<g fill="#1a86e0"><rect x="860.2" y="418.600" width="4" height=".8"/><path d="M860.3 419.400h3.800l-1.900 1.900z"/><path d="M860.3 423.200h3.800l-1.900-1.900z"/><rect x="860.2" y="423.200" width="4" height=".8"/></g>
<rect x="856.800" y="97.200" width="13.200" height="306" fill="#f7f7f7"/><path d="M856.900 97.200V403.200" stroke="#cfcfcf" stroke-width=".8"/>
<rect x="857.400" y="108.400" width="12.600" height="156" fill="#fafafa"/><rect x="857.400" y="244.800" width="12.600" height="19.400" fill="#e6e6e6"/><path d="M857.400 264.400H870" stroke="#8c8c8c" stroke-width="1"/><path d="M869.500 232V264" stroke="#777" stroke-width="1"/><path d="M857.400 108.200H870" stroke="#bdbdbd" stroke-width=".8"/>
<path d="M859.800 104.800h5l-2.500-3.200z" fill="#111"/><path d="M860.400 398.400h6.200l-3.100 3.800z" fill="#111"/>
<g transform="translate(847.300 104.200) scale(.8 .95) translate(-847.500 -104)"><path d="M843 98.800h9q.8 0 1.100.8l1.100 3.200q.6.400.6 1.200v4.400q0 .6-.6.600h-1.400q-.6 0-.6-.6v-.8h-9.400v.8q0 .6-.6.600h-1.400q-.6 0-.6-.6v-4.400q0-.8.600-1.200l1.100-3.200q.3-.8 1.100-.8z" fill="#1a5a9c"/><path d="M843.300 100.200h8.400l.9 2.600h-10.200z" fill="#fff"/><circle cx="843" cy="105.300" r="1" fill="#fff"/><circle cx="852" cy="105.300" r="1" fill="#fff"/></g>
<rect x="840.400" y="113.400" width="14.400" height="14.900" fill="#ddf2e0" stroke="#8fcf9e" stroke-width="1"/>
<g transform="translate(0 .8)"><path d="M843.400 124.800L849.400 118.800" stroke="#185fa6" stroke-width="2.900" stroke-linecap="round"/><path d="M853.300 116l-2.100 2.100l-1.600-.4l-.4-1.600l2.100-2.100c-1.500-.5-3.100-.1-4.100 1.200c-1 1.200-1 2.700-.4 3.900l1.800 1.800c1.200.6 2.700.6 3.900-.4c1.300-1 1.700-2.600 1.200-4.500z" fill="#185fa6"/></g>
<g fill="none" stroke="#1a5a9c" stroke-width="1.300"><rect x="842.600" y="132.600" width="7.600" height="5.600" rx=".6"/><rect x="849.800" y="141.400" width="4.600" height="3.600"/><path d="M841.600 140h9.600M843.600 140v5.400h4.400"/></g>
<circle cx="847.600" cy="156.300" r="5.700" fill="#fff" stroke="#1a5a9c" stroke-width="1.500"/><path d="M850.600 153.300l-1.800 4.200l-4.200 1.800l1.800-4.200z" fill="#1a5a9c"/><circle cx="847.600" cy="156.300" r=".8" fill="#fff"/>
<circle cx="846" cy="170.800" r="2.900" fill="#2b2e33"/><path d="M840.600 179.600c0-4 2.200-5.400 5.400-5.400s5.400 1.400 5.400 5.400z" fill="#2b2e33"/><circle cx="851.200" cy="173.200" r="2.200" fill="#1a86e0" stroke="#fff" stroke-width=".6"/><path d="M847.200 179.800c0-3 1.600-4 4-4s4 1 4 4z" fill="#1a86e0" stroke="#fff" stroke-width=".6"/>
<path transform="translate(839.600 182.800) scale(.68 .68)" d="M6.620 10.790c1.440 2.830 3.760 5.140 6.590 6.590l2.200-2.200c.27-.27.67-.36 1.020-.24 1.120.37 2.330.57 3.570.57.550 0 1 .45 1 1V20c0 .55-.45 1-1 1-9.390 0-17-7.610-17-17 0-.55.450-1 1-1h3.500c.55 0 1 .45 1 1 0 1.250.2 2.450.57 3.570.11.350.03.740-.25 1.020l-2.200 2.200z" fill="#2b2e33"/><path d="M848.400 184.400a6.600 6.600 0 0 1 6 6.400" stroke="#1a86e0" stroke-width="1.500" fill="none"/><path d="M841 191.600a6.600 6.600 0 0 0 4.400 5.800" stroke="#1a86e0" stroke-width="1.400" fill="none"/>
</svg>
<div id="bottom" style="position:absolute;left:0;top:427px;width:870px;height:35px;background:#fff"></div>
<div id="bb" style="position:absolute;left:0;top:427px;width:870px;height:35px">
<i style="position:absolute;left:280.9px;top:4px;width:1px;height:29px;background:#b7c6e6"></i>
<i style="position:absolute;left:355.3px;top:4px;width:1px;height:29px;background:#b7c6e6"></i>
<i style="position:absolute;left:430.7px;top:4px;width:1px;height:29px;background:#b7c6e6"></i>
<i style="position:absolute;left:505.3px;top:4px;width:1px;height:29px;background:#b7c6e6"></i>
<i style="position:absolute;left:581.8px;top:4px;width:1px;height:29px;background:#b7c6e6"></i>
<i style="position:absolute;left:738.0px;top:4px;width:1px;height:29px;background:#b7c6e6"></i>
<i style="position:absolute;left:810.1px;top:4px;width:1px;height:29px;background:#b7c6e6"></i>
<i style="position:absolute;left:840.9px;top:4px;width:1px;height:29px;background:#b7c6e6"></i>
<div style="position:absolute;left:11.5px;top:4.1px;width:63.8px;height:28.4px;border:1.400px solid #2b3c9c;background:#dfe8f4;box-shadow:inset 0 0 0 1px #c5d0ee;overflow:hidden"><svg style="left:1px;top:1px" width="60" height="24" viewBox="0 0 60 24"><rect width="60" height="24" fill="#dfe8f4"/><path d="M3 2h12v5h5v5h-6v6h8v4h-19z" fill="#5c7ea2"/><rect x="20" y="1.500" width="38" height="4.200" fill="#f4f7fb"/><rect x="26" y="6.800" width="32" height="4.200" fill="#f4f7fb"/><rect x="26" y="12" width="32" height="4.200" fill="#eef2f8"/><rect x="12" y="18.400" width="20" height="4.200" fill="#f4f7fb"/><path d="M17 3l2 0l-1 1.600z M9 20l2 0l-1 1.600z" fill="#fff"/>
<g font-family="Liberation Sans, sans-serif" font-size="3.200" fill="#7d8fa3"><text x="22" y="4.900">und jede Aufgabe</text><text x="28" y="10.200">in Teilziele und ein</text><text x="14" y="21.800">Entscheiden</text></g>
<circle cx="6.600" cy="7.800" r="5.600" fill="#fff" stroke="#2c2c34" stroke-width="1.300"/><text x="6.600" y="11" text-anchor="middle" font-family="Liberation Sans, sans-serif" font-weight="bold" font-size="8.600" fill="#1a7fd4">?</text></svg><span style="position:absolute;right:1.4px;bottom:0.7px;font-weight:bold;font-size:11.2px;line-height:11.2px;color:#000;white-space:nowrap;transform:scaleX(1);transform-origin:100% 100%;text-shadow:0 0 1.500px #fff,0 0 1.500px #fff,0 0 1px #fff;">Ziele</span></div>
<div style="position:absolute;left:77.6px;top:4.1px;width:64.2px;height:28.4px;border:1.400px solid #4b3d8e;background:#182268;box-shadow:inset 0 0 0 1px #a9a3d6;overflow:hidden"><svg style="left:1px;top:1px" width="60" height="24" viewBox="0 0 60 24"><rect width="60" height="24" fill="#182268"/>
<g stroke-width="1.500" stroke-linecap="round"><path d="M3.500 2.600h5.500M3.500 6h5.500M3.500 9.600h5.500M4.500 13.400h4.500" stroke="#c9d95e"/><path d="M13 8h5" stroke="#d8cf3e"/><path d="M22 12.600h10" stroke="#e8603e" stroke-width="1.900"/><path d="M36 11.400h5" stroke="#b060d4"/><path d="M43 3.600h12" stroke="#93c3f2"/><path d="M45 9.600h11M45 13.400h11" stroke="#c25fc4"/><path d="M3 21h9M15 22.800h5" stroke="#5fc486"/><path d="M13 16.800h5" stroke="#8aa0e0" stroke-width="1"/></g></svg><span style="position:absolute;right:1.2px;bottom:0.1px;font-weight:bold;font-size:9.8px;line-height:9.8px;color:#fff;white-space:nowrap;transform:scaleX(0.95);transform-origin:100% 100%;text-shadow:0 0 1.500px #101030,0 0 1.500px #101030,0 0 1px #000;">MindMap</span></div>
<div style="position:absolute;left:144.8px;top:4.1px;width:64.1px;height:28.4px;border:1.400px solid #4b3d8e;background:#2f5b76;box-shadow:inset 0 0 0 1px #a9a3d6;overflow:hidden"><svg style="left:1px;top:1px" width="60" height="24" viewBox="0 0 60 24"><rect width="60" height="24" fill="#2f5b76"/>
<path d="M30.600 11.800L6.400 2.600A26 26 0 0 1 10 -4H49A26 26 0 0 1 55 3.800Z" fill="#d5df6e"/><path d="M30.600 11.800L12-6M30.600 11.800L20-10M30.600 11.800L30-12M30.600 11.800L40-10M30.600 11.800L48-6" stroke="#b9c45c" stroke-width=".5"/>
<path d="M30.600 11.800L23-4A18 18 0 0 1 38-4Z" fill="#c8d462"/>
<path d="M30.600 11.800L16.800 9.400A14 14 0 0 0 22 23.500Z" fill="#b24596"/><path d="M30.600 11.800L22 23.500A14 14 0 0 0 27 26Z" fill="#8a5ad0"/>
<path d="M30.600 11.800L46 10A15.500 15.500 0 0 1 44.500 17.500Z" fill="#3fa86a"/><circle cx="30.600" cy="11.800" r="1.800" fill="#8a6a3a"/></svg><span style="position:absolute;right:1.8px;bottom:0.2px;font-weight:bold;font-size:10.9px;line-height:10.9px;color:#fff;white-space:nowrap;transform:scaleX(0.98);transform-origin:100% 100%;text-shadow:0 0 1.500px #101030,0 0 1.500px #101030,0 0 1px #000;">Sektor</span></div>
<div style="position:absolute;left:212px;top:4.1px;width:64.1px;height:28.4px;border:1.400px solid #4b3d8e;background:#5d7d98;box-shadow:inset 0 0 0 1px #a9a3d6;overflow:hidden"><svg style="left:1px;top:1px" width="60" height="24" viewBox="0 0 60 24"><rect width="60" height="24" fill="#5d7d98"/>
<g fill="#f1f2b4"><rect x="3" y="1.600" width="24.500" height="3"/><rect x="3" y="5.400" width="16" height="3"/><rect x="3" y="9.200" width="24.500" height="2.600"/></g>
<g fill="#8fc9f9"><rect x="34" y="1.600" width="24" height="3"/><rect x="34" y="5.400" width="24" height="3"/><rect x="34" y="9.200" width="24" height="2.600"/></g>
<rect x="1.500" y="13.600" width="26" height="3" fill="#5fd25f"/><rect x="31" y="13.600" width="27" height="3" fill="#f28a8a"/>
<g fill="#bfeabf"><rect x="3" y="17.600" width="24.500" height="2.800"/><rect x="3" y="21.200" width="24.500" height="2.800"/></g><rect x="34" y="17.600" width="24" height="2.800" fill="#9ccdf2"/>
<g fill="#e02a2a"><rect x="28.200" y="9.400" width="1.200" height="2.200"/><rect x="56.800" y="5.600" width="1.200" height="2.200"/></g><rect x="28.200" y="2" width="1.200" height="2.200" fill="#2fae2f"/><rect x="56.800" y="1.800" width="1.200" height="2.200" fill="#f0d82a"/>
<g font-family="Liberation Sans, sans-serif" font-size="2.600" fill="#7b8b6b"><text x="4" y="4">Lackiererei</text><text x="35" y="4">zu Neuheit</text><text x="4" y="16">Bessere Kapazitätsauslastung</text><text x="33" y="16">Bessere Umbau im Bestand</text></g></svg><span style="position:absolute;right:2.6px;bottom:0.5px;font-weight:bold;font-size:9px;line-height:9px;color:#000;white-space:nowrap;transform:scaleX(0.88);transform-origin:100% 100%;text-shadow:0 0 1.500px #fff,0 0 1.500px #fff,0 0 1px #fff;">ProContra</span></div>
<div style="position:absolute;left:286.4px;top:4.1px;width:64.5px;height:28.4px;border:1.400px solid #8c8762;background:#f8f6f1;box-shadow:inset 0 0 0 1px #dcd8c6;overflow:hidden"><svg style="left:3px;top:2.500px" width="16" height="16" viewBox="0 0 16 16"><circle cx="8" cy="8" r="6.500" fill="#fff" stroke="#25282d" stroke-width="1.300"/><path d="M8 4.200V8.400H11" stroke="#1a7fd4" stroke-width="1.300" fill="none"/></svg><span style="position:absolute;right:3.4px;bottom:0.3px;font-weight:bold;font-size:9px;line-height:9px;color:#111;white-space:nowrap;transform:scaleX(0.9);transform-origin:100% 100%;">Anpacken</span></div>
<div style="position:absolute;left:361.8px;top:4.1px;width:64.5px;height:28.4px;border:1.400px solid #8c8762;background:#f8f6f1;box-shadow:inset 0 0 0 1px #dcd8c6;overflow:hidden"><svg style="left:3.600px;top:3.400px" width="16" height="16" viewBox="-8 -8 16 16"><g fill="#2c2f34"><circle r="5.200"/><g><rect x="-1.700" y="-7.200" width="3.400" height="3.400" rx=".5"/><rect x="-1.700" y="3.800" width="3.400" height="3.400" rx=".5"/></g><g transform="rotate(60)"><rect x="-1.700" y="-7.200" width="3.400" height="3.400" rx=".5"/><rect x="-1.700" y="3.800" width="3.400" height="3.400" rx=".5"/></g><g transform="rotate(120)"><rect x="-1.700" y="-7.200" width="3.400" height="3.400" rx=".5"/><rect x="-1.700" y="3.800" width="3.400" height="3.400" rx=".5"/></g></g><circle r="2.900" fill="#fff"/><circle r="1.900" fill="#1585dd"/></svg><span style="position:absolute;right:2.9px;bottom:0.7px;font-weight:bold;font-size:10.2px;line-height:10.2px;color:#000;white-space:nowrap;transform:scaleX(0.945);transform-origin:100% 100%;">Projekte</span></div>
<div style="position:absolute;left:437px;top:4.1px;width:63.9px;height:28.4px;border:1.400px solid #8b5b98;background:#f7f0f9;box-shadow:inset 0 0 0 1px #dcc6e2;overflow:hidden"><svg style="left:2.600px;top:3.400px" width="18" height="14" viewBox="0 0 18 14"><circle cx="6" cy="3.800" r="2.900" fill="#2b2e33"/><path d="M.8 11.600c0-3.600 2-4.800 5.200-4.800s5.200 1.200 5.200 4.800z" fill="#2b2e33"/><circle cx="11.800" cy="6.400" r="2.300" fill="#1a86e0" stroke="#f6eff8" stroke-width=".6"/><path d="M7.600 13c0-3 1.600-4 4.200-4s4.200 1 4.200 4z" fill="#1a86e0" stroke="#f6eff8" stroke-width=".6"/></svg><span style="position:absolute;right:1.3px;bottom:-0.1px;font-weight:bold;font-size:10.4px;line-height:10.4px;color:#000;white-space:nowrap;transform:scaleX(1.04);transform-origin:100% 100%;">Team</span></div>
<div style="position:absolute;left:511.8px;top:4.1px;width:64.4px;height:28.4px;border:1.400px solid #3f7f45;background:#eff7ed;box-shadow:inset 0 0 0 1px #c4dcc4;overflow:hidden"><svg style="left:3.200px;top:1.800px" width="14" height="17" viewBox="0 0 14 17"><path d="M1.400 .6h2.400v1.600h2v-1.600h2.400v1.600h2v-1.600h2.400v4h-11.200z" fill="#2b2e33"/><path d="M2.600 5h8.800l1.200 8h-11.200z" fill="#1a86e0"/><rect x=".2" y="13.800" width="13.600" height="1.900" fill="#2b2e33"/></svg><span style="position:absolute;right:2.4px;bottom:-0.3px;font-weight:bold;font-size:9.0px;line-height:9.0px;color:#000;white-space:nowrap;transform:scaleX(1);transform-origin:100% 100%;">Strategie</span></div>
<svg style="left:0;top:0" width="870" height="35" viewBox="0 427 870 35">
<defs><radialGradient id="bg1" cx=".4" cy=".35" r=".7"><stop offset="0" stop-color="#7ee070"/><stop offset=".7" stop-color="#2fa83a"/><stop offset="1" stop-color="#177026"/></radialGradient>
<radialGradient id="bg2" cx=".4" cy=".35" r=".7"><stop offset="0" stop-color="#b21414"/><stop offset=".7" stop-color="#900a0a"/><stop offset="1" stop-color="#5c0404"/></radialGradient></defs>
<circle cx="601" cy="444.500" r="9" fill="url(#bg1)"/><path d="M601 439.500v10M596 444.500h10" stroke="#0f3a14" stroke-width="2.400"/>
<circle cx="625.500" cy="444.500" r="9" fill="url(#bg2)"/>
<path d="M640.600 453.200l3.200-8.400l-1-3.600c0-2 1.600-3 3.600-3.200l3.800 1.800l3 5l4 8.400h-4l-2.800-5.200l-3 1.600l-2.600 3.600z" fill="#30343a"/><circle cx="650.600" cy="437" r="2.500" fill="#e8b89c"/><path d="M648.200 453.200l6.400-8l4.800 8z" fill="#9aa0a6" stroke="#50555a" stroke-width=".6"/>
<g fill="#0f4f90"><rect x="665.500" y="448.800" width="2.800" height="2.700"/><rect x="669.800" y="445.800" width="2.800" height="5.700"/><rect x="674.200" y="442.200" width="2.800" height="9.300"/><rect x="678.600" y="438.600" width="3" height="12.900"/></g>
<g fill="none" stroke="#f07818" stroke-width="1.500"><rect x="690" y="442.600" width="15.400" height="3.800"/><rect x="691.200" y="446.400" width="13" height="6.400"/><path d="M697.700 442.600v10.200"/><path d="M697.700 442.400c-1.400-3-3.400-4.600-4.800-3.800c-1.400 1 0 3.400 4.800 3.800zM697.700 442.400c1.400-3 3.400-4.600 4.800-3.800c1.400 1 0 3.400-4.800 3.800z"/></g>
<g fill="#e01a22" stroke="#e01a22" stroke-width=".5" font-family="Liberation Serif, serif" font-weight="bold" font-size="21.500"><text x="714.200" y="452.900">!</text><text x="724.200" y="452.900">!</text></g>
<g><path d="M818.400 433.600h9.600l-1.400 1.800v6.400l2.400 2.600v1.400h-11.600v-1.400l2.400-2.600v-6.400z" fill="#2a9ad8"/><path d="M821.200 435.400v6.600" stroke="#8fd4f8" stroke-width="1.600"/><path d="M823.200 445.800v6l-.8 2l-.5-2v-6z" fill="#7d8a94"/></g>
<g fill="#fff" stroke="#b4b4b4" stroke-width=".8"><circle cx="861.400" cy="434" r="3.200"/><circle cx="861.400" cy="445" r="3.200"/><circle cx="861.400" cy="456" r="3.200"/></g>
</svg>
</div>
<svg style="left:65.2px;top:170.8px" width="84" height="88" viewBox="-42 -42 84 88">
<defs><radialGradient id="bBr" cx="0" cy="6" r="34" gradientUnits="userSpaceOnUse"><stop offset="0" stop-color="#e8281c"/><stop offset=".7" stop-color="#dc1f14"/><stop offset="1" stop-color="#c2140c"/></radialGradient>
<linearGradient id="bBw" x1="0" y1="-37" x2="0" y2="37" gradientUnits="userSpaceOnUse"><stop offset="0" stop-color="#ffffff"/><stop offset="1" stop-color="#d4d4d4"/></linearGradient>
<linearGradient id="bBb" x1="0" y1="8" x2="0" y2="33" gradientUnits="userSpaceOnUse"><stop offset="0" stop-color="#e8301c" stop-opacity="0"/><stop offset="1" stop-color="#ff6a30" stop-opacity=".95"/></linearGradient>
<linearGradient id="bBt" x1="0" y1="-18" x2="0" y2="18" gradientUnits="userSpaceOnUse"><stop offset="0" stop-color="#ffffff"/><stop offset="1" stop-color="#dcdcdc"/></linearGradient>
<clipPath id="bBc"><circle r="32"/></clipPath>
<filter id="bBs" x="-20%" y="-20%" width="140%" height="150%"><feGaussianBlur stdDeviation="1.800"/></filter></defs>
<ellipse cx="1" cy="3" rx="37" ry="37" fill="#000" opacity=".45" filter="url(#bBs)"/>
<circle r="37" fill="url(#bBw)"/><circle r="32.600" fill="#a8140c"/><circle r="32" fill="url(#bBr)"/>
<g clip-path="url(#bBc)"><path d="M-27 22C-24 -2 -8 -22 12 -30L-10 -40L-40 -20L-40 22Z" fill="#fff" opacity=".3"/>
<circle r="32" fill="url(#bBb)"/>
<text x="0" y="18" transform="translate(0 37.500) scale(1.0 -1) translate(0 -1)" text-anchor="middle" font-family="Liberation Sans, sans-serif" font-weight="bold" font-size="51" fill="#ffc4a8" opacity=".5">B</text></g>
<text x="0" y="18.200" transform="scale(1.0 1)" text-anchor="middle" font-family="Liberation Sans, sans-serif" font-weight="bold" font-size="51" fill="url(#bBt)" stroke="#b0b0b0" stroke-width=".4">B</text>
</svg><svg style="left:733.7px;top:96.80000000000001px" width="84" height="88" viewBox="-42 -42 84 88">
<defs><radialGradient id="bAr" cx="0" cy="6" r="34" gradientUnits="userSpaceOnUse"><stop offset="0" stop-color="#e8281c"/><stop offset=".7" stop-color="#dc1f14"/><stop offset="1" stop-color="#c2140c"/></radialGradient>
<linearGradient id="bAw" x1="0" y1="-37" x2="0" y2="37" gradientUnits="userSpaceOnUse"><stop offset="0" stop-color="#ffffff"/><stop offset="1" stop-color="#d4d4d4"/></linearGradient>
<linearGradient id="bAb" x1="0" y1="8" x2="0" y2="33" gradientUnits="userSpaceOnUse"><stop offset="0" stop-color="#e8301c" stop-opacity="0"/><stop offset="1" stop-color="#ff6a30" stop-opacity=".95"/></linearGradient>
<linearGradient id="bAt" x1="0" y1="-18" x2="0" y2="18" gradientUnits="userSpaceOnUse"><stop offset="0" stop-color="#ffffff"/><stop offset="1" stop-color="#dcdcdc"/></linearGradient>
<clipPath id="bAc"><circle r="32"/></clipPath>
<filter id="bAs" x="-20%" y="-20%" width="140%" height="150%"><feGaussianBlur stdDeviation="1.800"/></filter></defs>
<ellipse cx="1" cy="3" rx="37" ry="37" fill="#000" opacity=".45" filter="url(#bAs)"/>
<circle r="37" fill="url(#bAw)"/><circle r="32.600" fill="#a8140c"/><circle r="32" fill="url(#bAr)"/>
<g clip-path="url(#bAc)"><path d="M-27 22C-24 -2 -8 -22 12 -30L-10 -40L-40 -20L-40 22Z" fill="#fff" opacity=".3"/>
<circle r="32" fill="url(#bAb)"/>
<text x="0" y="18" transform="translate(0 37.500) scale(1.1 -1) translate(0 -1)" text-anchor="middle" font-family="Liberation Sans, sans-serif" font-weight="bold" font-size="51" fill="#ffc4a8" opacity=".5">A</text></g>
<text x="0" y="18.200" transform="scale(1.1 1)" text-anchor="middle" font-family="Liberation Sans, sans-serif" font-weight="bold" font-size="51" fill="url(#bAt)" stroke="#b0b0b0" stroke-width=".4">A</text>
</svg><svg style="left:800px;top:80px" width="70" height="80" viewBox="800 80 70 80"><ellipse cx="843.100" cy="118.800" rx="26.900" ry="25.100" fill="none" stroke="#e8141c" stroke-width="2.300"/></svg>
<i style="position:absolute;left:0;top:0;width:1px;height:47px;background:#a9a9a9"></i><i style="position:absolute;left:0;top:427px;width:1.2px;height:35px;background:#6a6a6a"></i><i style="position:absolute;left:0;top:460.8px;width:870px;height:1.2px;background:#454a5c"></i>
</body></html>
